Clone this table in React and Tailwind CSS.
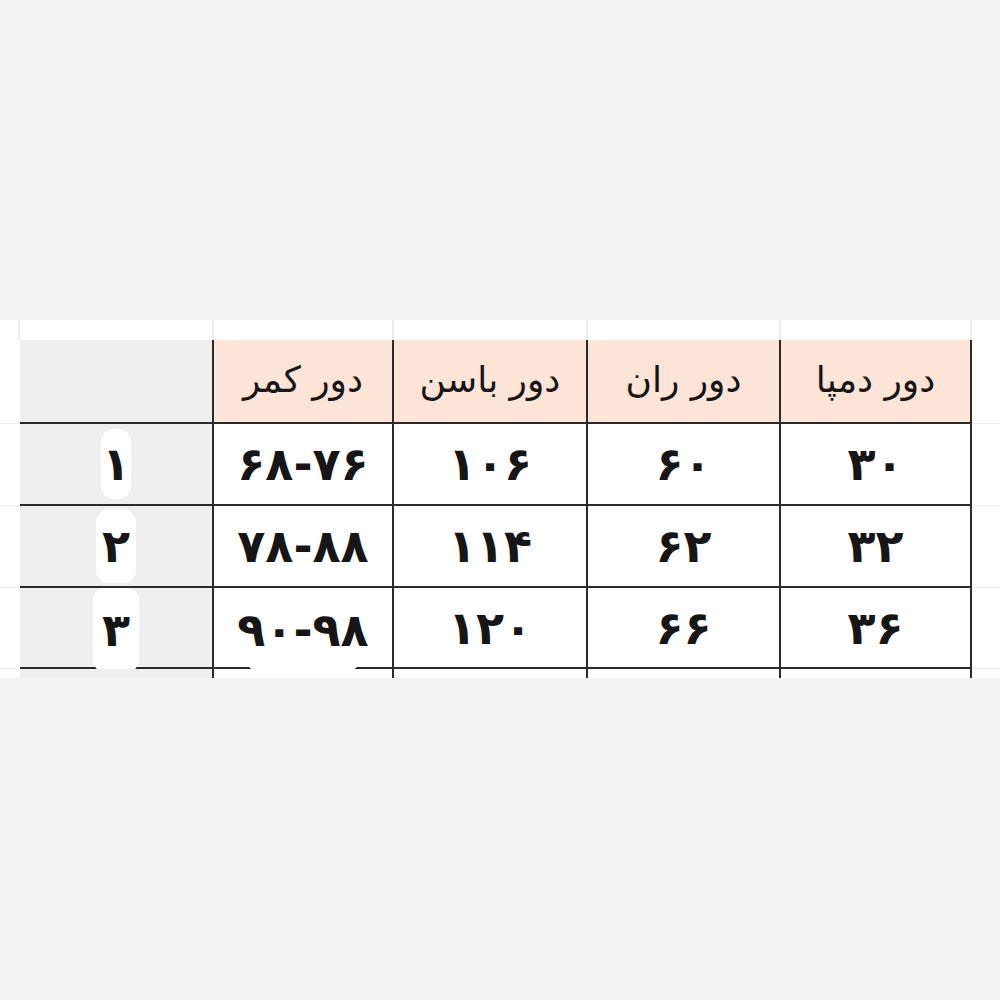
import React from 'react';

const COLS = [
    { w: 'w-[180px]', last: false },
    { w: 'w-[194px]', last: false },
    { w: 'w-[193px]', last: false },
    { w: 'w-[193px]', last: true },
];

const HEADERS = ['دور کمر', 'دور باسن', 'دور ران', 'دور دمپا'];

const ROWS = [
    { n: '۱', patch: 'w-[30px] h-[70px]', cells: ['۶۸-۷۶', '۱۰۶', '۶۰', '۳۰'] },
    { n: '۲', patch: 'w-[40px] h-[73px]', cells: ['۷۸-۸۸', '۱۱۴', '۶۲', '۳۲'] },
    { n: '۳', patch: 'w-[46px] h-[84px] mt-[5px]', cells: ['۹۰-۹۸', '۱۲۰', '۶۶', '۳۶'] },
];

function Cell({ col, className = '', children }) {
    return (
        <div
            className={`${col.w} ${className} border-l-2 border-[#2b2b2b] ${col.last ? 'border-r-2' : ''} flex items-center justify-center`}
        >
            {children}
        </div>
    );
}

function Num({ children }) {
    return (
        <span dir="ltr" className="text-[46px] font-bold leading-none tracking-[-2px]">
            {children}
        </span>
    );
}

function App() {
    return (
        <div className="w-[1000px] h-[1000px] bg-[#f3f3f3] pt-[320px] font-['DejaVu_Sans',sans-serif] text-[#161616]">
            {/* spreadsheet column strip */}
            <div className="flex h-[20px] gap-[2px] bg-[#ebebeb]">
                <div className="w-[18px] bg-white" />
                <div className="w-[192px] bg-white" />
                <div className="w-[178px] bg-white" />
                <div className="w-[192px] bg-white" />
                <div className="w-[191px] bg-white" />
                <div className="w-[189px] bg-white" />
                <div className="flex-1 bg-white" />
            </div>

            {/* header */}
            <div className="flex h-[84px]">
                <div className="w-[20px] bg-white border-b border-[#ececec]" />
                <div className="w-[192px] bg-[#efefef] border-b-2 border-[#2b2b2b]" />
                {HEADERS.map((h, i) => (
                    <Cell key={h} col={COLS[i]} className="bg-[#fce4d6] border-b-2 pb-[2px]">
                        <span dir="rtl" className="text-[36px] leading-none">{h}</span>
                    </Cell>
                ))}
                <div className="flex-1 bg-white border-b border-[#ececec]" />
            </div>

            {/* body rows */}
            {ROWS.map((r, ri) => (
                <div key={r.n} className={`flex ${ri === 2 ? 'h-[81px]' : 'h-[82px]'}`}>
                    <div className="w-[20px] bg-white border-b border-[#ececec]" />
                    <div className="w-[192px] bg-[#efefef] border-b-2 border-[#2b2b2b] flex items-center justify-center">
                        <div className={`${r.patch} bg-white rounded-[12px] flex items-center justify-center shrink-0`}>
                            <Num>{r.n}</Num>
                        </div>
                    </div>
                    {r.cells.map((c, i) => (
                        <Cell key={i} col={COLS[i]} className="bg-white border-b-2">
                            {ri === 2 && i === 0 ? (
                                <div className="w-[114px] h-[84px] mt-[5px] bg-white rounded-[14px] flex items-center justify-center shrink-0">
                                    <Num>{c}</Num>
                                </div>
                            ) : (
                                <Num>{c}</Num>
                            )}
                        </Cell>
                    ))}
                    <div className="flex-1 bg-white border-b border-[#ececec]" />
                </div>
            ))}

            {/* tail of the sheet */}
            <div className="flex h-[9px]">
                <div className="w-[20px] bg-white" />
                <div className="w-[192px] bg-[#efefef]" />
                {COLS.map((col, i) => (
                    <Cell key={i} col={col} className="bg-white" />
                ))}
                <div className="flex-1 bg-white" />
            </div>
        </div>
    );
}

export default App;
